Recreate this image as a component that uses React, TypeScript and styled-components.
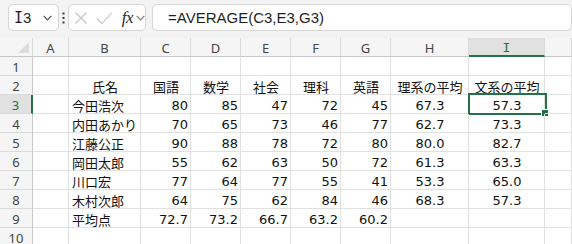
import styled, { createGlobalStyle } from 'styled-components'

const GlobalStyle = createGlobalStyle`
  html, body {
    margin: 0;
    padding: 0;
    background: #ffffff;
    overflow: hidden;
  }
`

const GREEN = '#217346'
const columns = ['A', 'B', 'C', 'D', 'E', 'F', 'G', 'H', 'I', '']

type Align = 'left' | 'center' | 'right'

type RowData = {
  cells: (string | { text: string; align: Align })[]
}

const rows: RowData[] = [
  { cells: [] },
  {
    cells: [
      '',
      { text: '氏名', align: 'center' },
      { text: '国語', align: 'center' },
      { text: '数学', align: 'center' },
      { text: '社会', align: 'center' },
      { text: '理科', align: 'center' },
      { text: '英語', align: 'center' },
      { text: '理系の平均', align: 'center' },
      { text: '文系の平均', align: 'center' },
    ],
  },
  { cells: ['', '今田浩次', '80', '85', '47', '72', '45', '67.3', '57.3'] },
  { cells: ['', '内田あかり', '70', '65', '73', '46', '77', '62.7', '73.3'] },
  { cells: ['', '江藤公正', '90', '88', '78', '72', '80', '80.0', '82.7'] },
  { cells: ['', '岡田太郎', '55', '62', '63', '50', '72', '61.3', '63.3'] },
  { cells: ['', '川口宏', '77', '64', '77', '55', '41', '53.3', '65.0'] },
  { cells: ['', '木村次郎', '64', '75', '62', '84', '46', '68.3', '57.3'] },
  { cells: ['', '平均点', '72.7', '73.2', '66.7', '63.2', '60.2', '', ''] },
  { cells: [] },
]

// column index -> default alignment (B text left, C-G numbers right, H-I centered)
const defaultAlign = (col: number): Align => {
  if (col <= 1) return 'left'
  if (col <= 6) return 'right'
  return 'center'
}

const Page = styled.div`
  width: 572px;
  height: 244px;
  overflow: hidden;
  background: #ffffff;
`

const Toolbar = styled.div`
  display: flex;
  align-items: flex-start;
  height: 38px;
  padding: 4px 0 0 8px;
  box-sizing: border-box;
  background: #f3f3f3;
  overflow: hidden;
`

const Box = styled.div`
  display: flex;
  align-items: center;
  height: 27px;
  box-sizing: border-box;
  background: #ffffff;
  border: 1px solid #d6d6d6;
  border-radius: 5px;
`

const NameBox = styled(Box)`
  width: 101px;
  padding: 0 6px 0 5px;
  justify-content: space-between;
  font: 15px 'Liberation Sans', sans-serif;
  color: #1f1f1f;
`

const Dots = styled.div`
  width: 21px;
  height: 27px;
  display: flex;
  align-items: center;
  justify-content: center;
`

const FnBox = styled(Box)`
  width: 84px;
  padding: 0 0 0 5px;
  gap: 0;
`

const Fx = styled.span`
  font: italic 17px 'Liberation Serif', serif;
  color: #2b2b2b;
  margin: 0 3px 0 9px;
  letter-spacing: -0.5px;
`

const FormulaBox = styled(Box)`
  flex: 1 0 auto;
  min-width: 420px;
  margin-left: 6px;
  padding-left: 15px;
  font: 15px 'Liberation Sans', sans-serif;
  color: #1f1f1f;
`

const SlabI = styled.span`
  font-family: 'DejaVu Sans Mono', monospace;
`

const Grid = styled.div`
  display: grid;
  grid-template-columns: 33px 36px 72px repeat(5, 50px) 78px 76px 1fr;
  grid-auto-rows: 19px;
`

const HeaderCell = styled.div<{ $active?: boolean; $corner?: boolean }>`
  position: relative;
  display: flex;
  align-items: center;
  justify-content: center;
  box-sizing: border-box;
  background: ${(p) => (p.$active ? '#e1e1e1' : '#f5f5f5')};
  color: ${(p) => (p.$active ? GREEN : '#444444')};
  border-right: 1px solid #dadada;
  border-bottom: ${(p) => (p.$active ? `2px solid ${GREEN}` : '1px solid #c8c8c8')};
  font: 13px 'Noto Sans', sans-serif;
  padding-top: 1px;
`

const Corner = styled.div`
  position: absolute;
  right: 3px;
  bottom: 3px;
  width: 0;
  height: 0;
  border-left: 11px solid transparent;
  border-bottom: 11px solid #dcdcdc;
`

const RowHeader = styled.div<{ $active?: boolean }>`
  display: flex;
  align-items: center;
  justify-content: center;
  box-sizing: border-box;
  background: ${(p) => (p.$active ? '#e1e1e1' : '#f5f5f5')};
  color: ${(p) => (p.$active ? GREEN : '#444444')};
  border-right: ${(p) => (p.$active ? `2px solid ${GREEN}` : '1px solid #c8c8c8')};
  border-bottom: 1px solid #dadada;
  font: 13px 'Noto Sans', sans-serif;
  padding-top: 1px;
`

const Cell = styled.div<{ $align: Align; $selected?: boolean }>`
  position: relative;
  display: flex;
  align-items: center;
  justify-content: ${(p) =>
    p.$align === 'left' ? 'flex-start' : p.$align === 'right' ? 'flex-end' : 'center'};
  box-sizing: border-box;
  padding: 2px 2px 0 3px;
  border-right: 1px solid #e1e1e1;
  border-bottom: 1px solid #e1e1e1;
  font: 13px 'DejaVu Sans', 'Noto Sans CJK JP', sans-serif;
  color: #111111;
  white-space: nowrap;
`

const Selection = styled.div`
  position: absolute;
  left: -1px;
  top: -2px;
  width: 79px;
  height: 22px;
  box-sizing: border-box;
  border: 2px solid ${GREEN};
  pointer-events: none;
`

const FillHandle = styled.div`
  position: absolute;
  right: -4px;
  bottom: -4px;
  width: 6px;
  height: 6px;
  background: ${GREEN};
  border: 1px solid #ffffff;
`

const Chevron = ({ color = '#5a5a4a' }: { color?: string }) => (
  <svg width="9" height="6" viewBox="0 0 9 6">
    <path d="M0.7 0.8 L4.5 4.8 L8.3 0.8" fill="none" stroke={color} strokeWidth="1.2" />
  </svg>
)

const CancelIcon = () => (
  <svg width="14" height="14" viewBox="0 0 14 14">
    <path d="M1.5 1.5 L12.5 12.5 M12.5 1.5 L1.5 12.5" stroke="#c4c4c4" strokeWidth="1.1" />
  </svg>
)

const EnterIcon = () => (
  <svg width="17" height="14" viewBox="0 0 17 14" style={{ marginLeft: 8 }}>
    <path d="M1 7.5 L6 12.5 L16 1.5" fill="none" stroke="#c4c4c4" strokeWidth="1.1" />
  </svg>
)

const DotsIcon = () => (
  <svg width="3" height="12" viewBox="0 0 3 12">
    <rect x="0.5" y="0.5" width="2" height="2" fill="#3a3a3a" />
    <rect x="0.5" y="5" width="2" height="2" fill="#3a3a3a" />
    <rect x="0.5" y="9.5" width="2" height="2" fill="#3a3a3a" />
  </svg>
)

const App = () => {
  return (
    <Page>
      <GlobalStyle />
      <Toolbar>
        <NameBox>
          <span>
            <SlabI>I</SlabI>3
          </span>
          <Chevron />
        </NameBox>
        <Dots>
          <DotsIcon />
        </Dots>
        <FnBox>
          <CancelIcon />
          <EnterIcon />
          <Fx>fx</Fx>
          <Chevron color="#7a7a7a" />
        </FnBox>
        <FormulaBox>=AVERAGE(C3,E3,G3)</FormulaBox>
      </Toolbar>
      <Grid>
        <HeaderCell $corner>
          <Corner />
        </HeaderCell>
        {columns.map((c, i) => (
          <HeaderCell key={i} $active={c === 'I'}>
            {c === 'I' ? <SlabI>I</SlabI> : c}
          </HeaderCell>
        ))}
        {rows.map((row, r) => (
          <Row key={r} index={r + 1} row={row} />
        ))}
      </Grid>
    </Page>
  )
}

const Row = ({ index, row }: { index: number; row: RowData }) => (
  <>
    <RowHeader $active={index === 3}>{index}</RowHeader>
    {columns.map((_, col) => {
      const raw = row.cells[col] ?? ''
      const text = typeof raw === 'string' ? raw : raw.text
      const align = typeof raw === 'string' ? defaultAlign(col) : raw.align
      const selected = index === 3 && col === 8
      return (
        <Cell key={col} $align={align}>
          {text}
          {selected && (
            <Selection>
              <FillHandle />
            </Selection>
          )}
        </Cell>
      )
    })}
  </>
)

export default App
